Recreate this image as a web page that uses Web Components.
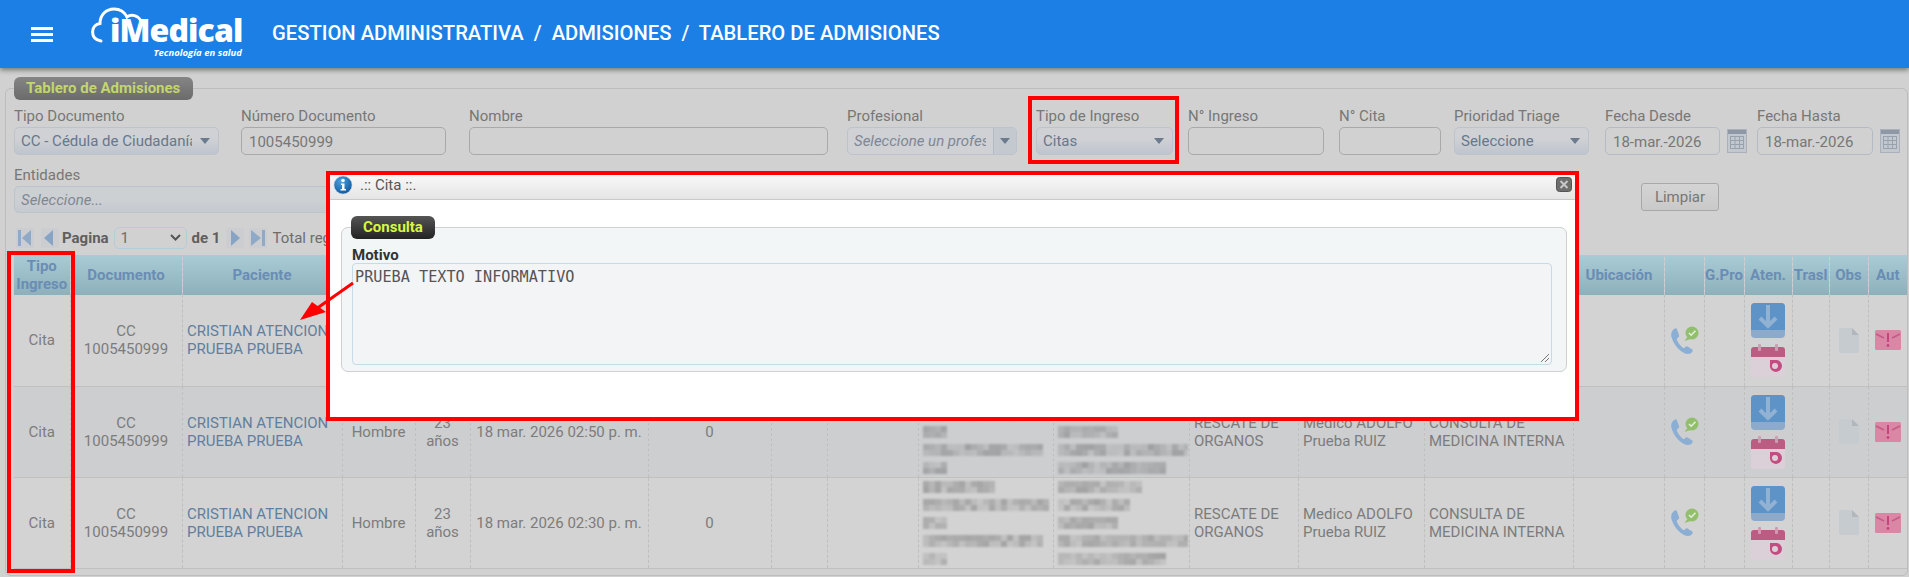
<!DOCTYPE html>
<html lang="es"><head><meta charset="utf-8"><title>Tablero de Admisiones</title>
<style>
html,body{margin:0;padding:0;height:577px;overflow:hidden;background:#d1d1d1;font-family:Roboto,"Liberation Sans",sans-serif;}
</style></head><body>
<app-header></app-header>
<admission-board></admission-board>
<note-marks></note-marks>
<cita-dialog></cita-dialog>
<script>
const def=(n,html,cls)=>customElements.define(n,class extends HTMLElement{constructor(){super();const s=this.attachShadow({mode:'open'});s.innerHTML=typeof html==='function'?html(this):html;}connectedCallback(){if(cls)cls(this);}});

/* ---------- header ---------- */
def('app-header',`<style>
:host{display:flex;align-items:center;height:68px;background:#1c7fe6;box-shadow:0 2px 5px rgba(0,0,0,.45);position:relative;z-index:2;color:#fff;font-family:Roboto,sans-serif}
.burger{width:22px;height:15px;margin-left:31px;display:flex;flex-direction:column;justify-content:space-between}
.burger i{display:block;height:3px;background:#fff}
.logo{position:relative;width:152px;height:50px;margin-left:38px;margin-top:-4px;margin-right:29px;flex:none}
.logo svg{position:absolute;left:0;top:0}
.brand{position:absolute;left:19px;top:7px;font:800 32px/32px "Open Sans",sans-serif;letter-spacing:-.9px}
.tag{position:absolute;right:1px;top:40px;font:italic 700 9.5px/12px "Open Sans",sans-serif;white-space:nowrap}
.crumb{font-size:20.2px;font-weight:500;white-space:pre;margin-top:-2px}
</style>
<div class="burger"><i></i><i></i><i></i></div>
<div class="logo"><svg width="60" height="40" viewBox="0 0 60 40" fill="none" stroke="#fff" stroke-width="3" stroke-linecap="round"><path d="M10 34C4 33 1.600 29 1.600 25C1.600 20 5 17 9 16.500C9 8 15 2 23 2C30 2 34 6 36 10C40 7 47 8 50 14"/></svg>
<div class="brand">iMedical</div><div class="tag">Tecnología en salud</div></div>
<div class="crumb">GESTION ADMINISTRATIVA  /  ADMISIONES  /  TABLERO DE ADMISIONES</div>`);

/* ---------- form bits ---------- */
const fieldCss=`<style>
:host{display:block;font-family:Roboto,sans-serif;font-size:15px;color:#777}
.l{height:18px;line-height:18px;margin-bottom:2px;white-space:nowrap}
.box{box-sizing:border-box;height:28px;display:flex;align-items:center;border:1px solid #a9a9a9;border-radius:5px;padding:1px 7px 0;overflow:hidden;white-space:nowrap}
.sel{background:linear-gradient(#cfd1d4 40%,#bfc5ce);border-color:#bcc3cc;color:#68778a;padding:0 6px}
.date{border-color:#b5bbc6}
.t{flex:1;overflow:hidden;min-width:0;line-height:20px}
.ph{font-style:italic;color:#7f8793}
.tri{width:0;height:0;border:5px solid transparent;border-top:6px solid #6b7a8d;border-bottom:0;margin:0 2px 0 8px;flex:none}
.btn{flex:none;align-self:stretch;width:22px;margin:0 -6px 0 7px;border-left:1px solid #b3bac5;display:flex;align-items:center;justify-content:center;background:#c4c9d0}
.btn .tri{margin:0}
.row{display:flex;align-items:center}
.row .box{flex:none}
.cal{margin-left:7px;flex:none}
</style>`;
def('ui-field',el=>{
 const k=el.getAttribute('kind')||'input',v=el.getAttribute('value')||'',w=el.getAttribute('w'),lab=el.getAttribute('label');
 let inner='';
 if(k==='input')inner=`<div class="box" style="width:${w}px"><span class="t">${v}</span></div>`;
 if(k==='select')inner=`<div class="box sel" style="width:${w}px"><span class="t">${v}</span><span class="tri"></span></div>`;
 if(k==='combo')inner=`<div class="box sel" style="width:${w}px;background:#cfd1d5"><span class="t ph">${v}</span><span class="btn"><span class="tri"></span></span></div>`;
 if(k==='entry')inner=`<div class="box sel" style="width:${w}px;height:27px;background:linear-gradient(#cdd0d3 50%,#c5cad1)"><span class="t ph">${v}</span></div>`;
 if(k==='date')inner=`<div class="row"><div class="box date" style="width:${w}px"><span class="t">${v}</span></div>
  <svg class="cal" width="20" height="24" viewBox="0 0 20 24"><rect x=".5" y=".5" width="19" height="23" fill="#c3c8ce" stroke="#aab1ba"/><rect x="1" y="1" width="18" height="4" fill="#8d97a5"/><path d="M3 7.500h14M3 11.500h14M3 15.500h14M3 19.500h14M3.500 7v13M8 7v13M12.500 7v13M16.500 7v13" stroke="#98a2af" fill="none"/></svg></div>`;
 return fieldCss+`<div class="l">${lab}</div>`+inner;
});

/* ---------- pager ---------- */
def('ui-pager',`<style>
:host{display:flex;align-items:center;height:21px;font-family:Roboto,sans-serif;font-size:15px;color:#6d6d6d;white-space:nowrap}
svg{flex:none;display:block}
b{font-weight:700;color:#5f5f5f}
.s{box-sizing:border-box;width:73px;height:22px;border:1px solid #b5cdd9;border-radius:5px;display:flex;align-items:center;justify-content:space-between;padding:0 5px 0 6px;margin:0 5px;color:#6d6d6d}
</style>
<svg width="18" height="20" style="margin-left:2px" viewBox="0 0 18 20"><rect width="18" height="20" fill="#cbcdd0"/><path d="M2 2h3v16H2zM15 2v16L6 10z" fill="#8fa9c6"/></svg>
<svg width="18" height="20" style="margin-left:7px" viewBox="0 0 18 20"><rect width="18" height="20" fill="#cbcdd0"/><path d="M12 2v16L3 10z" fill="#87a4c4"/></svg>
<b style="margin-left:3px">Pagina</b>
<div class="s"><span>1</span><svg width="11" height="7" viewBox="0 0 11 7"><path d="M1 1l4.500 4.500L10 1" stroke="#555" stroke-width="2" fill="none"/></svg></div>
<b>de 1</b>
<svg width="18" height="20" style="margin-left:6px" viewBox="0 0 18 20"><rect width="18" height="20" fill="#cbcdd0"/><path d="M5 2v16l9-8z" fill="#87a4c4"/></svg>
<svg width="18" height="20" style="margin-left:5px" viewBox="0 0 18 20"><rect width="18" height="20" fill="#cbcdd0"/><path d="M2 2v16l10-8zM13 2h3v16h-3z" fill="#8fa9c6"/></svg>
<span style="margin-left:5px">Total reg</span>`);

/* ---------- blurred cell ---------- */
let seed=7;const rnd=()=>(seed=(seed*16807)%2147483647)/2147483647;
def('blur-lines',el=>{
 const ws=el.getAttribute('lines').split(',').map(Number);let r='';
 const op=()=>(.15+rnd()*.36).toFixed(2);
 ws.forEach((w,i)=>{const y=i*18+3;for(let x=0;x<w;x+=6){
   r+=`<rect x="${x}" y="${y}" width="6" height="6" fill="#767676" opacity="${op()}"/><rect x="${x}" y="${y+6}" width="6" height="6" fill="#767676" opacity="${op()}"/>`;}});
 return `<style>:host{display:block}svg{display:block;filter:blur(.8px)}</style><svg width="130" height="${ws.length*18}">${r}</svg>`;
});

/* ---------- icons ---------- */
def('row-icon',el=>{
 const n=el.getAttribute('name');const I={
 phone:`<svg width="29" height="29" viewBox="0 0 29 29"><path d="M5 2.500C2 4 .5 7 1.500 11C3.500 18 8 24 15 27.500C18 28.500 21 28 22.500 25.500C23 24.500 22.500 23.500 21.500 23L17.500 20.500C16.500 20 15.500 20.500 15 21.500C14.500 22.300 13.500 22.300 12.500 21.500C10 19.500 8 16.500 7 14C6.500 13 7 12 8 11.500C9 11 9.500 10 9 9L7 3.500C6.700 2.500 5.800 2 5 2.500Z" fill="#8aaed4"/><path d="M17 11.500l-2.500 3.500 6-2z" fill="#92bf6c"/><circle cx="22" cy="7" r="6.500" fill="#92bf6c"/><path d="M19 7l2.200 2.200L25.500 4.800" stroke="#e3eedd" stroke-width="1.600" fill="none"/></svg>`,
 down:`<svg width="34" height="35" viewBox="0 0 34 35"><rect width="34" height="35" rx="4" fill="#8eaacb"/><path d="M0 4a4 4 0 0 1 4-4h26a4 4 0 0 1 4 4v23H0z" fill="#5e93c7"/><path d="M17 2v19M9 15l8 8 8-8" stroke="#92b2d4" stroke-width="4" fill="none"/></svg>`,
 cal:`<svg width="34" height="33" viewBox="0 0 34 33"><rect y="3" width="34" height="30" rx="3" fill="#dcd0d8"/><path d="M0 6a3 3 0 0 1 3-3h28a3 3 0 0 1 3 3v7H0z" fill="#bb5c83"/><rect x="7" width="3" height="7" rx="1" fill="#cf9db3"/><rect x="24" width="3" height="7" rx="1" fill="#cf9db3"/><path d="M19 16h7a6 6 0 1 1-7 5z" fill="#c34c80"/><circle cx="24" cy="22" r="3" fill="#dcd0d8"/></svg>`,
 doc:`<svg width="20" height="25" viewBox="0 0 20 25"><path d="M2 0h11l7 7v16a2 2 0 0 1-2 2H2a2 2 0 0 1-2-2V2a2 2 0 0 1 2-2z" fill="#c6cbd0"/><path d="M13 0l7 7h-7z" fill="#b1b7bd"/></svg>`,
 mail:`<svg width="26" height="20" viewBox="0 0 26 20"><rect width="26" height="20" rx="1.500" fill="#d987a5"/><path d="M1 4l8 4M25 4l-8 4" stroke="#c45a85" stroke-width="1.500"/><path d="M13 3v9" stroke="#c4457c" stroke-width="2"/><circle cx="13" cy="15.500" r="1.400" fill="#c4457c"/></svg>`};
 return `<style>:host{display:block;line-height:0}svg{display:block;margin:auto;filter:blur(.35px)}</style>`+I[n];
});

/* ---------- board table ---------- */
const W=[56,112,160,73,55,178,123,56,91,135,136,109,126,149,91,40,40,48,37,39,39];
const HEAD=['Tipo<br>Ingreso','Documento','Paciente','','','','','','','','','','','','Ubicación','','G.Pro','Aten.','Trasl','Obs','Aut'];
const B1='70,125,20,117,20',B2='84,70,55,128,104';
const row=(hide,time)=>{
 const c=(t,cl='')=>`<td class="${cl}">${t}</td>`;
 const name='<a>CRISTIAN ATENCION<br>PRUEBA PRUEBA</a>';
 const tail=`<td></td><td class="ic"><row-icon name="phone"></row-icon></td><td></td>
   <td class="ic st"><row-icon name="down"></row-icon><row-icon name="cal"></row-icon></td><td></td>
   <td class="ic"><row-icon name="doc"></row-icon></td><td class="ic"><row-icon name="mail"></row-icon></td>`;
 if(hide)return `<tr>${c('Cita','ce')}${c('CC<br>1005450999','ce')}${c(name)}<td colspan="11"></td>${tail}</tr>`;
 return `<tr>${c('Cita','ce')}${c('CC<br>1005450999','ce')}${c(name)}${c('Hombre','ce')}${c('23<br>años','ce')}${c('18 mar. 2026 '+time,'ce')}${c('0','ce')}<td></td><td></td>
  <td><blur-lines lines="${B1}"></blur-lines></td><td><blur-lines lines="${B2}"></blur-lines></td>
  ${c('RESCATE DE<br>ORGANOS')}${c('Medico ADOLFO<br>Prueba RUIZ')}${c('CONSULTA DE<br>MEDICINA INTERNA')}${tail}</tr>`;
};
def('board-table',`<style>
:host{display:block;font-family:Roboto,sans-serif;font-size:15px;color:#7c7c7c}
table{border-collapse:collapse;table-layout:fixed;width:1893px}
th{height:40px;padding:0;font-weight:700;font-size:15px;line-height:18px;color:#6a8db5;background:linear-gradient(#a9cbd5,#8eb0ba);border-left:1px dashed #c3c8cb;text-align:center;overflow:hidden;white-space:nowrap}
th:first-child,td:first-child{border-left:0}
th.ub{text-align:left;padding-left:12px}
td{height:91px;padding:0 4.500px;line-height:18px;border-left:1px dashed #bfbfbf;border-bottom:1px solid #c0c0c0;overflow:hidden;white-space:nowrap;box-sizing:border-box}
tr:nth-child(even) td{background:#cdced0}
tr:nth-child(odd) td{background:#d3d3d3}
td.ce{text-align:center}
td.ic{padding:0;text-align:center}
td.st row-icon+row-icon{margin-top:6px}
a{color:#5f7f9f}
</style><table><colgroup>${W.map(w=>`<col style="width:${w}px">`).join('')}</colgroup>
<thead><tr>${HEAD.map((h,i)=>`<th class="${i==14?'ub':''}">${h}</th>`).join('')}</tr></thead>
<tbody>${row(true)}${row(false,'02:50 p. m.')}${row(false,'02:30 p. m.')}</tbody></table>`);

/* ---------- board ---------- */
def('admission-board',`<style>
:host{display:block;font-family:Roboto,sans-serif;padding:9px 1px 0 5px}
fieldset{margin:0;padding:0 0 7px 8px;border:1px solid #bdbdbd;border-radius:6px;min-width:0;height:499px;box-sizing:border-box}
legend{padding:0;margin-left:0;box-sizing:border-box;width:179px;height:23px;line-height:23px;border-radius:6px;background:linear-gradient(#858585,#6b6b6b);color:#c3d56e;font-weight:700;font-size:15px;white-space:nowrap}
legend span{display:block;padding-left:12px}
.g1{display:grid;grid-template-columns:227px 228px 378px 189px 152px 151px 115px 151px 152px 152px;margin-top:7px}
.r2{display:flex;margin-top:11px}
.r2 button{box-sizing:border-box;width:78px;height:28px;margin:17px 188px 0 auto;background:linear-gradient(#d4d4d4,#c9c9c9);border:1px solid #a8a8a8;border-radius:3px;color:#777;font:15px Roboto,sans-serif;padding:0}
ui-pager{margin-top:14px}
board-table{margin-top:7px}
</style>
<fieldset><legend><span>Tablero de Admisiones</span></legend>
<div class="g1">
<ui-field kind="select" label="Tipo Documento" w="205" value="CC - Cédula de Ciudadanía"></ui-field>
<ui-field label="Número Documento" w="205" value="1005450999"></ui-field>
<ui-field label="Nombre" w="359"></ui-field>
<ui-field kind="combo" label="Profesional" w="170" value="Seleccione un profesional"></ui-field>
<ui-field kind="select" label="Tipo de Ingreso" w="137" value="Citas"></ui-field>
<ui-field label="N° Ingreso" w="136"></ui-field>
<ui-field label="N° Cita" w="102"></ui-field>
<ui-field kind="select" label="Prioridad Triage" w="135" value="Seleccione"></ui-field>
<ui-field kind="date" label="Fecha Desde" w="115" value="18-mar.-2026"></ui-field>
<ui-field kind="date" label="Fecha Hasta" w="116" value="18-mar.-2026"></ui-field>
</div>
<div class="r2"><ui-field kind="entry" label="Entidades" w="620" value="Seleccione..."></ui-field><button>Limpiar</button></div>
<ui-pager></ui-pager>
<board-table></board-table>
</fieldset>`);

/* ---------- annotation marks ---------- */
def('note-marks',`<style>
:host{display:block;position:absolute;left:0;top:0;width:0;height:0;z-index:6}
i{position:absolute;box-sizing:border-box;border:4px solid #f00}
svg{position:absolute;left:296px;top:278px}
</style>
<i style="left:1028px;top:96px;width:151px;height:68px"></i>
<i style="left:7px;top:251px;width:68px;height:322px"></i>
<svg width="62" height="46" viewBox="0 0 62 46"><path d="M57 5L20 31" stroke="#f00" stroke-width="3"/><path d="M4 42L16 24L30 34z" fill="#f00"/></svg>`);

/* ---------- dialog ---------- */
def('cita-dialog',`<style>
:host{display:block;position:absolute;left:326px;top:171px;width:1253px;height:250px;box-sizing:border-box;border:4.500px solid #f00;background:#fff;z-index:5;font-family:Roboto,sans-serif}
.bar{box-sizing:border-box;height:25px;background:linear-gradient(#f8f8f8,#e5e5e5);border-bottom:1px solid #c9c9c9;display:flex;align-items:center;font-size:15px;color:#555;padding:0 0 4px 3px;position:relative}
.bar svg.i{margin-right:7px;flex:none}
.x{position:absolute;right:3px;top:2px}
fieldset{margin:16px 8px 0 11px;padding:0 14px 0 10px;height:156px;box-sizing:border-box;border:1px solid #d0d0d0;border-radius:7px;background:#f2f6f7;min-width:0}
legend{box-sizing:border-box;width:84px;height:23px;padding:0;line-height:23px;border-radius:6px;background:linear-gradient(#555,#232323);color:#d8f83c;font-weight:700;font-size:15px;margin-left:-1px}
legend span{display:block;padding-left:12px}
label{display:block;font-weight:700;font-size:15px;color:#333;line-height:18px;margin-top:7px}
.ta{position:relative;box-sizing:border-box;height:102px;margin-top:-1px;border:1px solid #c4dbe9;border-radius:4px;background:#f2f4f6;padding:4px 2px;font:15.2px/18px "DejaVu Sans Mono",monospace;color:#555}
.ta svg{position:absolute;right:1px;bottom:1px}
</style>
<div class="bar"><svg class="i" width="20" height="20" viewBox="0 0 20 20"><defs><radialGradient id="g" cx=".4" cy=".3" r=".8"><stop offset="0" stop-color="#4aa3e2"/><stop offset="1" stop-color="#0b4f95"/></radialGradient></defs><circle cx="10" cy="10" r="9" fill="url(#g)" stroke="#bcd" stroke-width=".6"/><circle cx="10" cy="5.500" r="1.800" fill="#fff"/><path d="M8 8.500h3.500V14H13v1.500H7.500V14H9V10H8z" fill="#fff"/></svg>.:: Cita ::.
<svg class="x" width="16" height="15" viewBox="0 0 16 15"><rect x=".5" y=".5" width="15" height="14" rx="3" fill="#6e6e6e" stroke="#555"/><path d="M4.500 4l7 7M11.500 4l-7 7" stroke="#c9c9c9" stroke-width="2"/></svg></div>
<fieldset><legend><span>Consulta</span></legend>
<label>Motivo</label>
<div class="ta">PRUEBA TEXTO INFORMATIVO<svg width="11" height="11" viewBox="0 0 11 11"><path d="M10 2L2 10M10 6L6 10" stroke="#777" fill="none"/></svg></div>
</fieldset>`);
</script>
</body></html>
